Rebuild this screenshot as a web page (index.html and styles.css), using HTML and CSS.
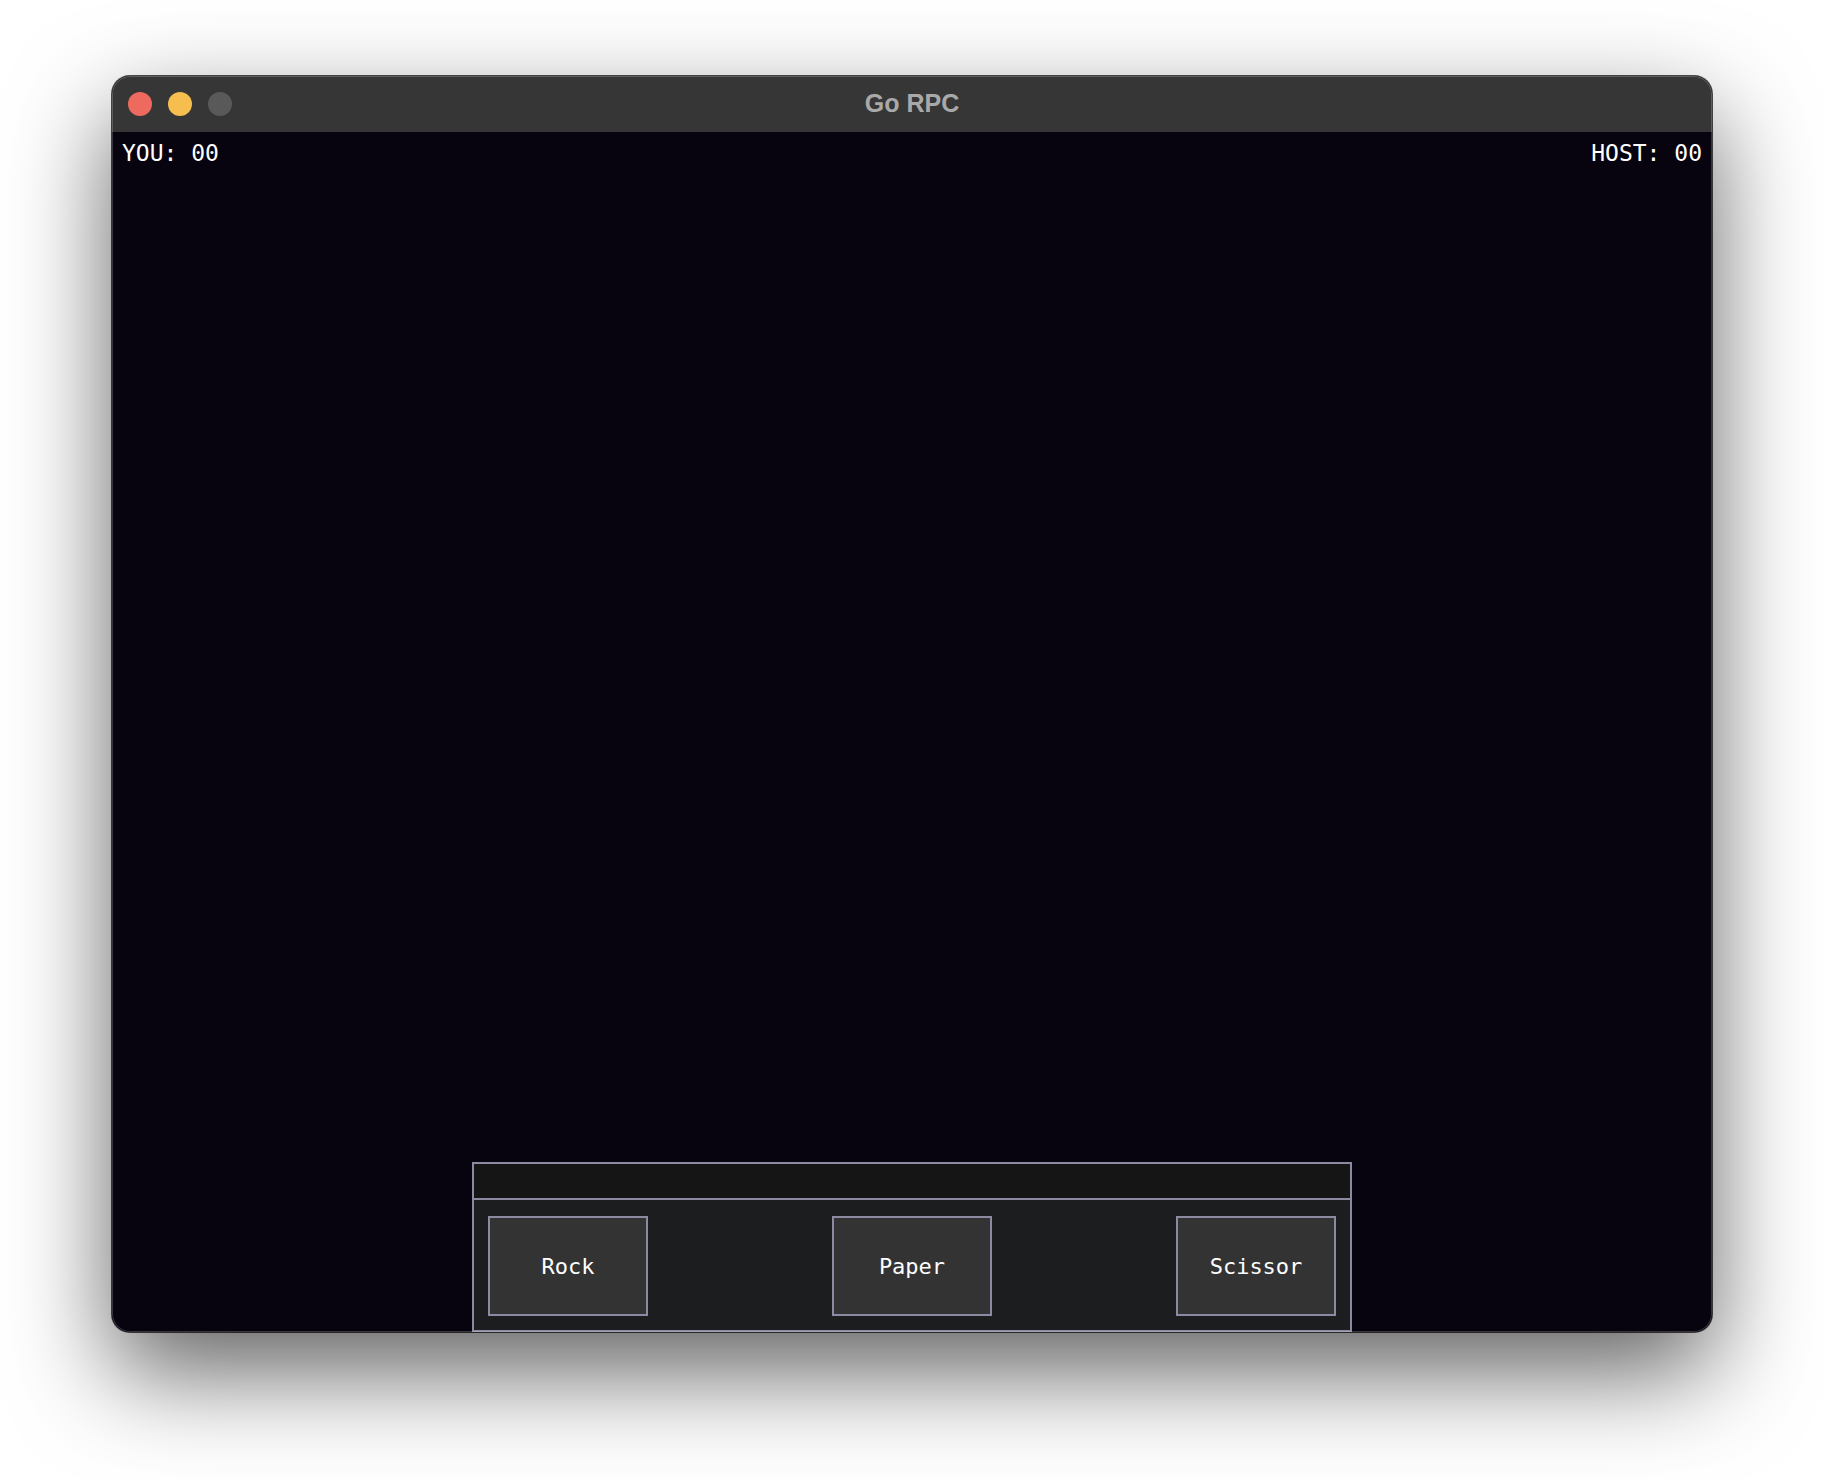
FILE: index.html
```html
<!DOCTYPE html>
<html lang="en">
<head>
<meta charset="utf-8">
<title>Go RPC</title>
<link rel="stylesheet" href="styles.css">
</head>
<body>
<div class="window">
  <div class="titlebar">
    <div class="lights">
      <span class="light red"></span>
      <span class="light yellow"></span>
      <span class="light gray"></span>
    </div>
    <div class="title">Go RPC</div>
    <div class="spacer"></div>
  </div>
  <div class="content">
    <div class="scores">
      <span class="score">YOU: 00</span>
      <span class="score">HOST: 00</span>
    </div>
    <div class="stage"></div>
    <div class="panel">
      <div class="panel-top"></div>
      <div class="panel-buttons">
        <button class="choice">Rock</button>
        <button class="choice">Paper</button>
        <button class="choice">Scissor</button>
      </div>
    </div>
  </div>
</div>
</body>
</html>
```

FILE: styles.css
```css
html, body {
  margin: 0;
  padding: 0;
  background: #ffffff;
}

body {
  width: 1824px;
  height: 1480px;
  padding: 76px 0 0 112px;
  box-sizing: border-box;
  overflow: hidden;
}

.window {
  position: relative;
  width: 1600px;
  height: 1256px;
  border-radius: 18px;
  overflow: hidden;
  display: flex;
  flex-direction: column;
  background: #07030f;
  box-shadow: 0 0 0 1px rgba(0, 0, 0, 0.7), 0 40px 100px rgba(0, 0, 0, 0.62);
}

.window::after {
  content: "";
  position: absolute;
  inset: 0;
  border-radius: 18px;
  box-shadow: inset 0 0 0 1px rgba(255, 255, 255, 0.2);
  pointer-events: none;
}

.titlebar {
  height: 56px;
  flex: 0 0 56px;
  background: #363636;
  display: grid;
  grid-template-columns: 1fr auto 1fr;
  align-items: center;
}

.lights {
  display: flex;
  gap: 16px;
  padding-left: 16px;
}

.light {
  width: 24px;
  height: 24px;
  border-radius: 50%;
  display: block;
}

.light.red { background: #ee6a5f; }
.light.yellow { background: #f5be4f; }
.light.gray { background: #595959; }

.title {
  font-family: "Liberation Sans", Arial, sans-serif;
  font-weight: bold;
  font-size: 25px;
  color: #a9a9a9;
  line-height: 1;
  padding-bottom: 2px;
}

.content {
  flex: 1;
  display: flex;
  flex-direction: column;
  align-items: center;
  background: #07030f;
}

.scores {
  align-self: stretch;
  display: flex;
  justify-content: space-between;
  padding: 10px 10px 0 10px;
}

.score {
  font-family: "DejaVu Sans Mono", "Liberation Mono", monospace;
  font-size: 23px;
  line-height: 23px;
  color: #ffffff;
}

.stage {
  flex: 1;
}

.panel {
  width: 880px;
  height: 170px;
  box-sizing: border-box;
  border: 2px solid #8b8aa2;
  display: flex;
  flex-direction: column;
}

.panel-top {
  height: 34px;
  background: #151515;
  border-bottom: 2px solid #8b8aa2;
}

.panel-buttons {
  flex: 1;
  background: #1c1d1f;
  display: flex;
  justify-content: space-between;
  align-items: flex-start;
  padding: 16px 14px 0 14px;
}

.choice {
  width: 160px;
  height: 100px;
  box-sizing: border-box;
  border: 2px solid #8b8aa2;
  background: #333333;
  color: #ffffff;
  font-family: "DejaVu Sans Mono", "Liberation Mono", monospace;
  font-size: 22px;
  padding: 0;
  margin: 0;
  border-radius: 0;
  display: flex;
  align-items: center;
  justify-content: center;
}
```
